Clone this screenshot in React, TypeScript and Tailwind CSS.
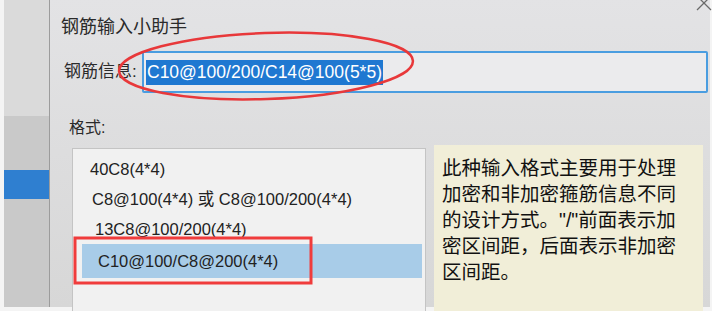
const formats = [
  { text: "40C8(4*4)", indent: "pl-[8px]" },
  { text: "C8@100(4*4) 或 C8@100/200(4*4)", indent: "pl-[10px]" },
  { text: "13C8@100/200(4*4)", indent: "pl-[13px]" },
  { text: "C10@100/C8@200(4*4)", indent: "pl-[16px]" },
];

const noteLines = [
  "此种输入格式主要用于处理",
  "加密和非加密箍筋信息不同",
  "的设计方式。\"/\"前面表示加",
  "密区间距，后面表示非加密",
  "区间距。",
];

export default function App() {
  const selected = 3;

  return (
    <div className="relative h-[311px] w-[712px] overflow-hidden bg-[#f4f4f4] pb-[4px] pl-[4px] pr-[2px] font-['Liberation_Sans','Noto_Sans_CJK_SC',sans-serif]">
      <div className="flex h-full bg-linear-to-b from-[#e3e3e5] to-[#d7d7d7]">
        {/* side panel behind the dialog */}
        <div className="flex w-[46px] shrink-0 flex-col border-r border-[#9c9c9c]">
          <div className="h-[116px] bg-[#dadada]" />
          <div className="flex-1 bg-[#c9c9c9] pt-[54px]">
            <div className="h-[29px] bg-[#2f7fd0]" />
          </div>
        </div>

        {/* dialog */}
        <div className="flex min-w-0 flex-1 flex-col pl-[11px] pr-[2px]">
          <div className="pt-[15px] text-[18px] leading-[24px] text-[#2a2a2a]">
            钢筋输入小助手
          </div>

          <div className="mt-[12px] flex items-center">
            <span className="ml-[3px] w-[78px] shrink-0 text-[17px] text-[#2a2a2a]">
              钢筋信息:
            </span>
            <div className="flex h-[42px] flex-1 items-center rounded-[2px] border-2 border-[#4a9de0] bg-[#ebebed] pl-[2px]">
              <span className="bg-[#1f78d1] px-[1px] text-[17.5px] leading-[25px] text-white">
                C10@100/200/C14@100(5*5)
              </span>
            </div>
          </div>

          <div className="ml-[8px] mt-[24px] text-[16px] leading-[22px] text-[#2a2a2a]">
            格式:
          </div>

          <div className="ml-[11px] mt-[9px] flex items-start gap-[8px]">
            <div className="h-[170px] w-[354px] shrink-0 border border-[#c4c4c4] bg-[#f1f1f1] pt-[5px]">
              {formats.map((f, i) => (
                <div
                  key={f.text}
                  className={`ml-[9px] mr-[3px] flex items-center text-[16.5px] text-[#222] ${f.indent} ${
                    i === selected ? "h-[34px] bg-[#a8cce8]" : "h-[30px]"
                  }`}
                >
                  {f.text}
                </div>
              ))}
            </div>

            <div className="-mt-[3px] mr-[5px] h-[170px] flex-1 bg-[#f1eed8] pl-[8px] pt-[10px] text-[19.5px] leading-[26px] text-[#111]">
              {noteLines.map((line) => (
                <div key={line} className="whitespace-nowrap">
                  {line}
                </div>
              ))}
            </div>
          </div>
        </div>
      </div>

      {/* red annotations + close glyph */}
      <svg
        className="pointer-events-none absolute left-0 top-0"
        width="712"
        height="311"
        viewBox="0 0 712 311"
      >
        <ellipse
          cx="266"
          cy="66"
          rx="147"
          ry="33"
          transform="rotate(-2 266 66)"
          fill="none"
          stroke="#e8383a"
          strokeWidth="2.5"
        />
        <rect
          x="75"
          y="238"
          width="236"
          height="45"
          fill="none"
          stroke="#f03c3c"
          strokeWidth="3"
        />
        <path
          d="M697 10 L711 -4 M697 -4 L711 10"
          stroke="#6a6a6a"
          strokeWidth="1.3"
          fill="none"
        />
      </svg>
    </div>
  );
}
